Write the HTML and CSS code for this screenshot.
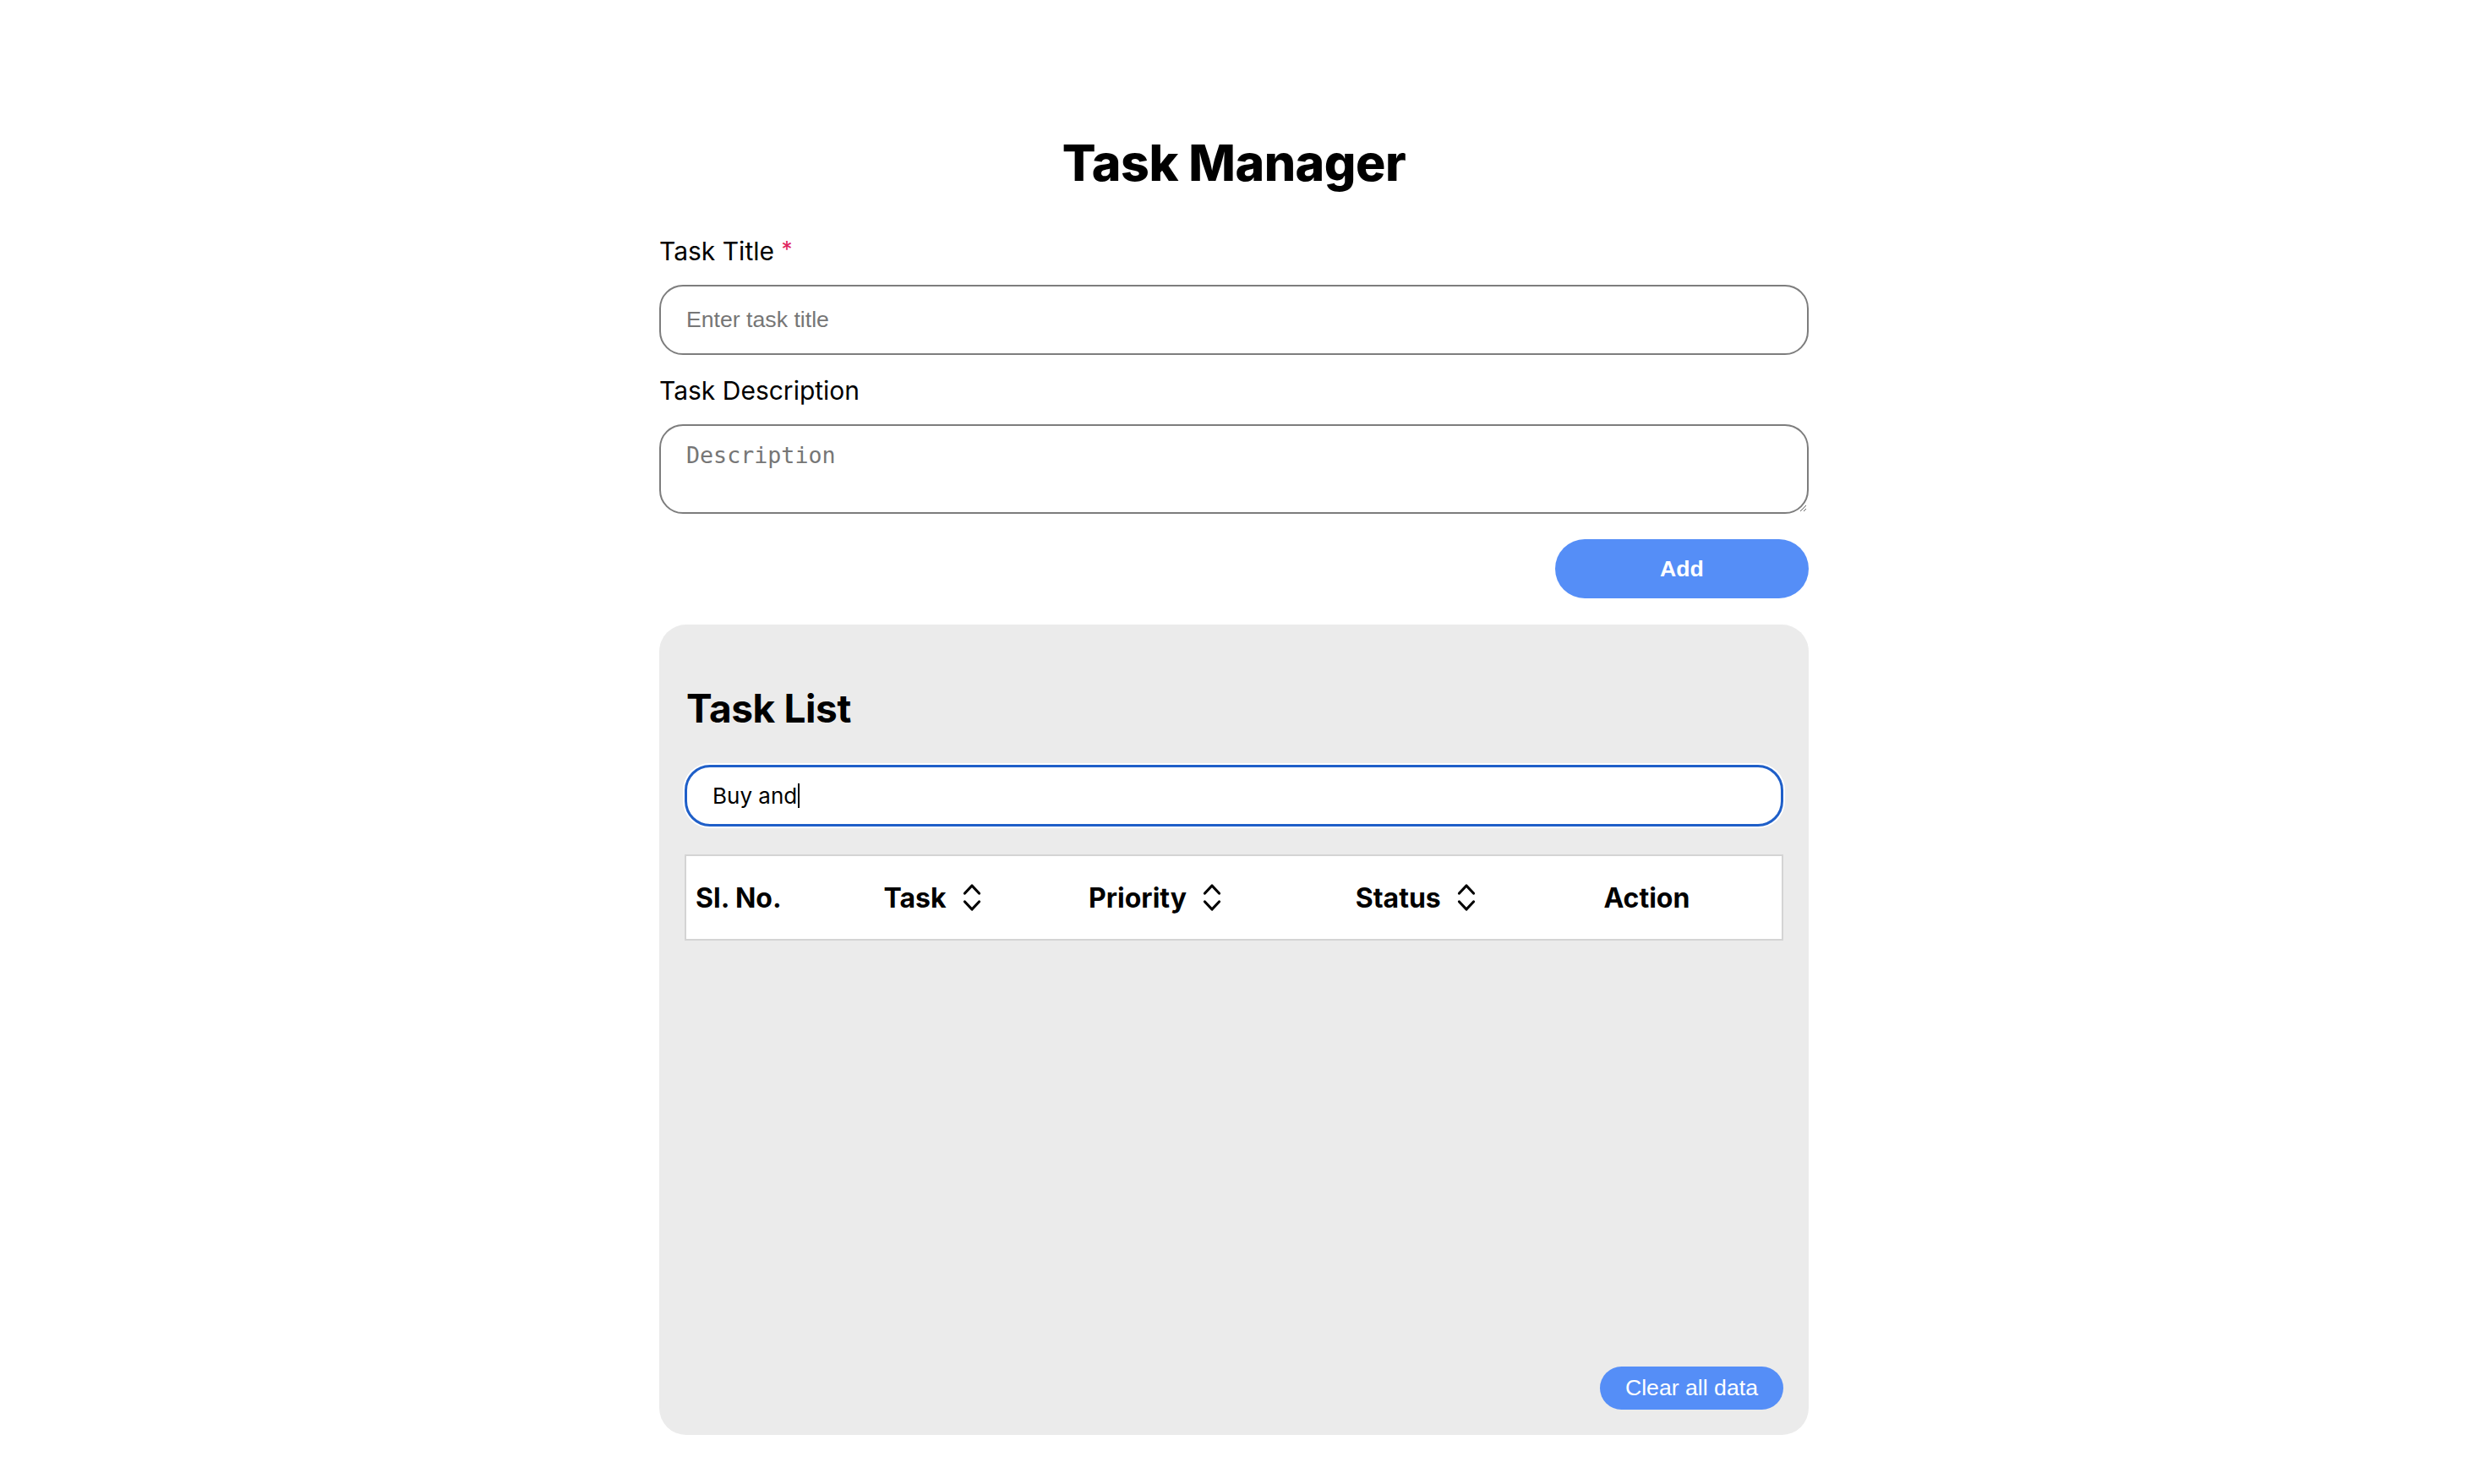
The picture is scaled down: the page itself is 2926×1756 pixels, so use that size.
FILE: index.html
```html
<!DOCTYPE html>
<html lang="en">
<head>
<meta charset="utf-8">
<title>Task Manager</title>
<link rel="stylesheet" href="styles.css">
</head>
<body>
<main class="app">
  <h1 class="title">Task Manager</h1>
  <form class="task-form">
    <label class="field-label" for="title">Task Title <span class="req">*</span></label>
    <input id="title" class="text-input" type="text" placeholder="Enter task title">
    <label class="field-label second" for="desc">Task Description</label>
    <textarea id="desc" class="text-area" placeholder="Description"></textarea>
    <div class="form-actions">
      <button type="button" class="btn btn-add">Add</button>
    </div>
  </form>

  <section class="panel">
    <h2 class="panel-title">Task List</h2>
    <div class="search" role="textbox">Buy and<span class="caret"></span></div>
    <table class="tasks">
      <colgroup>
        <col class="c1"><col class="c2"><col class="c3"><col class="c4"><col class="c5">
      </colgroup>
      <thead>
        <tr>
          <th>Sl. No.</th>
          <th><span class="sort">Task <svg class="sort-icon" viewBox="0 0 22 34"><path d="M2.5 12 L11 3 L19.5 12 M2.5 22 L11 31 L19.5 22"/></svg></span></th>
          <th><span class="sort">Priority <svg class="sort-icon" viewBox="0 0 22 34"><path d="M2.5 12 L11 3 L19.5 12 M2.5 22 L11 31 L19.5 22"/></svg></span></th>
          <th><span class="sort">Status <svg class="sort-icon" viewBox="0 0 22 34"><path d="M2.5 12 L11 3 L19.5 12 M2.5 22 L11 31 L19.5 22"/></svg></span></th>
          <th>Action</th>
        </tr>
      </thead>
      <tbody></tbody>
    </table>
    <div class="panel-footer">
      <button type="button" class="btn btn-clear">Clear all data</button>
    </div>
  </section>
</main>
</body>
</html>
```

FILE: styles.css
```css
html, body {
  margin: 0;
  padding: 0;
  background: #ffffff;
}

body {
  font-family: Inter, "Noto Sans", sans-serif;
  color: #000;
  padding-right: 6px;
}

.app {
  width: 1360px;
  margin: 0 auto;
  padding-top: 156px;
  padding-bottom: 40px;
}

.title {
  margin: 0;
  text-align: center;
  font-size: 59px;
  line-height: 73px;
  font-weight: 800;
  letter-spacing: -0.5px;
}

.task-form {
  display: flex;
  flex-direction: column;
  margin-top: 48px;
}

.field-label {
  font-size: 30px;
  line-height: 36px;
  font-weight: 400;
}

.field-label.second {
  margin-top: 24px;
}

.req {
  color: #e0245e;
  font-size: 26px;
  vertical-align: 4px;
}

.text-input,
.text-area {
  box-sizing: border-box;
  width: 100%;
  margin: 22px 0 0;
  border: 2px solid #7d7d7d;
  border-radius: 28px;
  background: #fff;
  color: #000;
  outline: none;
}

.text-input {
  height: 83px;
  padding: 0 30px;
  font-family: "Liberation Sans", Arial, sans-serif;
  font-size: 26.67px;
}

.text-area {
  height: 106px;
  padding: 19px 30px;
  font-family: "DejaVu Sans Mono", monospace;
  font-size: 26.67px;
  display: block;
}

.text-input::placeholder,
.text-area::placeholder {
  color: #767676;
}

.form-actions {
  display: flex;
  justify-content: flex-end;
  margin-top: 30px;
}

.btn {
  border: none;
  background: #558ef7;
  color: #fff;
  font-family: "Liberation Sans", Arial, sans-serif;
  font-size: 26.67px;
  cursor: pointer;
}

.btn-add {
  width: 300px;
  height: 70px;
  border-radius: 35px;
  font-weight: 700;
}

.panel {
  box-sizing: border-box;
  margin-top: 31px;
  min-height: 959px;
  padding: 30px;
  background: #ebebeb;
  border-radius: 32px;
  display: flex;
  flex-direction: column;
}

.panel-title {
  margin: 40px 0 0 2px;
  font-size: 46px;
  line-height: 58px;
  font-weight: 700;
  letter-spacing: -0.4px;
}

.search {
  box-sizing: border-box;
  margin-top: 38px;
  height: 73px;
  padding: 0 30px;
  display: flex;
  align-items: center;
  background: #fff;
  border: 3px solid #1f5fc8;
  border-radius: 30px;
  box-shadow: 0 0 0 2px #ffffff;
  font-size: 26px;
  color: #000;
}

.caret {
  display: inline-block;
  width: 2px;
  height: 29px;
  margin-left: 1px;
  background: #000;
}

.tasks {
  margin-top: 33px;
  width: 100%;
  border-collapse: collapse;
  table-layout: fixed;
  background: #fff;
  border: 2px solid #d4d4d4;
}

.c1 { width: 223px; }
.c2 { width: 242px; }
.c3 { width: 315px; }
.c4 { width: 293px; }
.c5 { width: 222px; }

.tasks th {
  height: 98px;
  padding: 0 0 0 11px;
  text-align: left;
  font-size: 32px;
  font-weight: 700;
  vertical-align: middle;
  white-space: nowrap;
}

.sort {
  display: inline-flex;
  align-items: center;
  gap: 19px;
}

.sort-icon {
  width: 22px;
  height: 34px;
  fill: none;
  stroke: #000;
  stroke-width: 3.2;
  stroke-linecap: round;
  stroke-linejoin: round;
}

.panel-footer {
  margin-top: auto;
  display: flex;
  justify-content: flex-end;
}

.btn-clear {
  height: 51px;
  padding: 0 30px;
  border-radius: 26px;
}
```
